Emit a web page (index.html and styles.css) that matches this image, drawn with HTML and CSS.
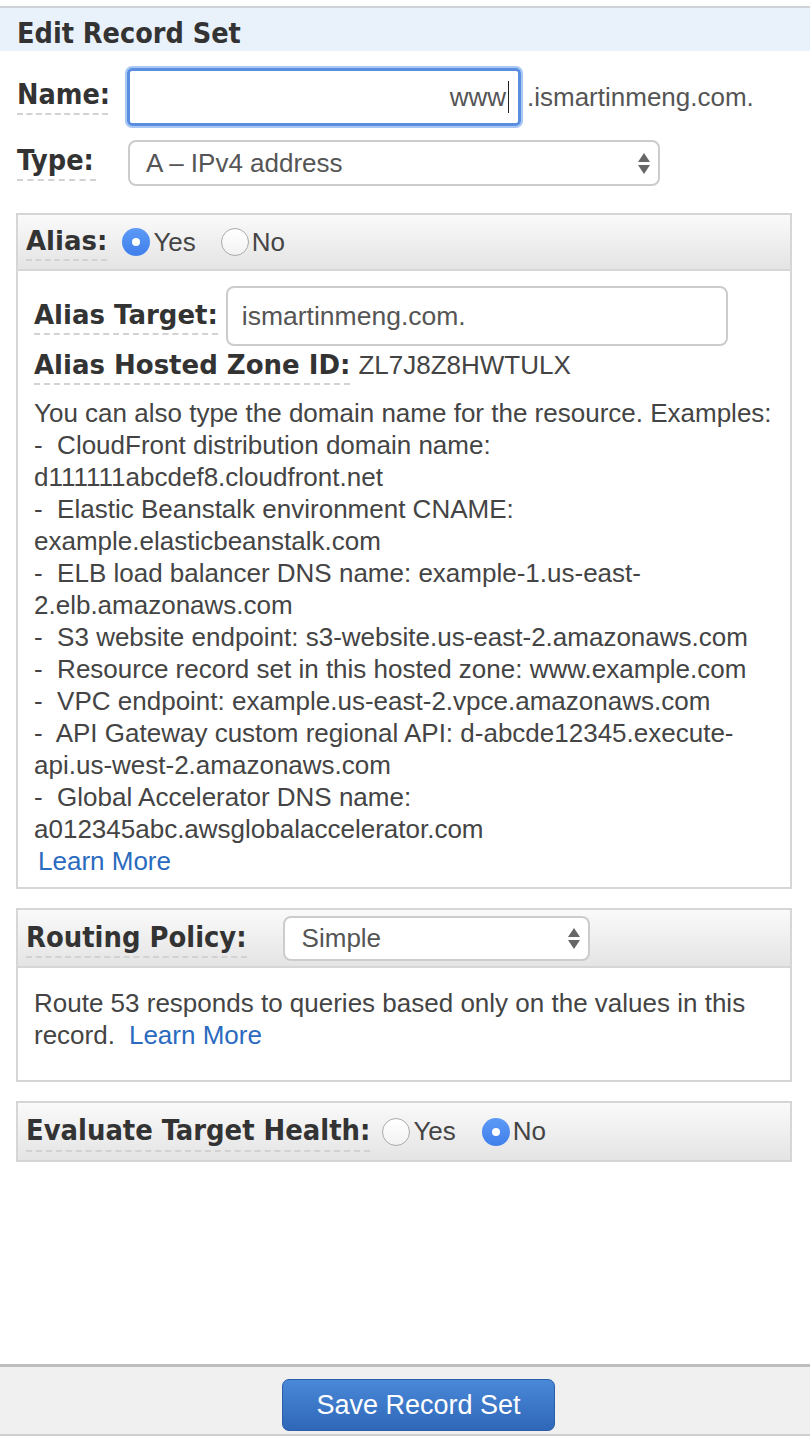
FILE: index.html
```html
<!DOCTYPE html>
<html>
<head>
<meta charset="utf-8">
<link rel="stylesheet" href="styles.css">
</head>
<body>
<div class="page">
  <div class="title-bar">Edit Record Set</div>

  <div class="row name-row">
    <span class="lbl lbl-top">Name:</span>
    <div class="name-input"><span class="name-val">www</span><span class="caret"></span></div>
    <span class="suffix">.ismartinmeng.com.</span>
  </div>

  <div class="row type-row">
    <span class="lbl lbl-top">Type:</span>
    <div class="select type-select"><span>A – IPv4 address</span><span class="arrows"><i class="up"></i><i class="down"></i></span></div>
  </div>

  <div class="panel alias-panel">
    <div class="panel-head">
      <span class="lbl lbl-alias">Alias:</span>
      <span class="radio on"></span><span class="opt">Yes</span>
      <span class="radio off gap"></span><span class="opt">No</span>
    </div>
    <div class="panel-body alias-body">
      <div class="target-row">
        <span class="lbl lbl-wide">Alias Target:</span>
        <div class="text-input">ismartinmeng.com.</div>
      </div>
      <div class="zone-row">
        <span class="lbl lbl-wide">Alias Hosted Zone ID:</span>
        <span class="zone-val">ZL7J8Z8HWTULX</span>
      </div>
      <div class="examples">
        <div>You can also type the domain name for the resource. Examples:</div>
        <div>-&nbsp; CloudFront distribution domain name:</div>
        <div>d111111abcdef8.cloudfront.net</div>
        <div>-&nbsp; Elastic Beanstalk environment CNAME:</div>
        <div>example.elasticbeanstalk.com</div>
        <div>-&nbsp; ELB load balancer DNS name: example-1.us-east-</div>
        <div>2.elb.amazonaws.com</div>
        <div>-&nbsp; S3 website endpoint: s3-website.us-east-2.amazonaws.com</div>
        <div>-&nbsp; Resource record set in this hosted zone: www.example.com</div>
        <div>-&nbsp; VPC endpoint: example.us-east-2.vpce.amazonaws.com</div>
        <div>-&nbsp; API Gateway custom regional API: d-abcde12345.execute-</div>
        <div>api.us-west-2.amazonaws.com</div>
        <div>-&nbsp; Global Accelerator DNS name:</div>
        <div>a012345abc.awsglobalaccelerator.com</div>
        <div class="learn"><a>Learn More</a></div>
      </div>
    </div>
  </div>

  <div class="panel routing-panel">
    <div class="panel-head">
      <span class="lbl lbl-narrow">Routing Policy:</span>
      <div class="select routing-select"><span>Simple</span><span class="arrows"><i class="up"></i><i class="down"></i></span></div>
    </div>
    <div class="panel-body routing-body">
      <div class="routing-text">Route 53 responds to queries based only on the values in this</div>
      <div class="routing-text routing-line2"><span>record.</span><a class="inline-link">Learn More</a></div>
    </div>
  </div>

  <div class="panel health-panel">
    <div class="panel-head">
      <span class="lbl lbl-narrow">Evaluate Target Health:</span>
      <span class="radio off"></span><span class="opt">Yes</span>
      <span class="radio on gap"></span><span class="opt">No</span>
    </div>
  </div>

  <div class="footer">
    <button class="save">Save Record Set</button>
  </div>
</div>
</body>
</html>
```

FILE: styles.css
```css
html, body {
  margin: 0;
  padding: 0;
  background: #fff;
}
body {
  font-family: "Liberation Sans", Arial, sans-serif;
  color: #444;
}
.page {
  min-height: 1436px;
  display: flex;
  flex-direction: column;
  padding-top: 6px;
  box-sizing: border-box;
}
.title-bar {
  border-top: 2px solid #cfd3d8;
  background: #e9f1fb;
  height: 43px;
  line-height: 52px;
  padding-left: 17px;
  font-family: "DejaVu Sans Condensed", "DejaVu Sans", sans-serif;
  font-weight: bold;
  font-size: 28.5px;
  color: #333;
}
.row {
  display: flex;
  align-items: center;
}
.lbl {
  font-family: "DejaVu Sans", Verdana, sans-serif;
  font-weight: bold;
  color: #333;
  border-bottom: 2px dashed #d2d2d2;
  line-height: 1.1;
  padding-bottom: 3px;
  white-space: nowrap;
}
.lbl-top {
  font-family: "DejaVu Sans Condensed", "DejaVu Sans", sans-serif;
  font-size: 28.5px;
}
.name-row {
  margin-top: 15px;
  padding-left: 17px;
  height: 62px;
}
.name-row .lbl { width: 91px; margin-right: 19px; }
.name-input {
  width: 394px;
  height: 58px;
  border: 3px solid #5a8fe0;
  border-radius: 5px;
  box-shadow: 0 0 0 2px #aac8f5;
  display: flex;
  align-items: center;
  justify-content: flex-end;
  padding-right: 9px;
  box-sizing: border-box;
  font-size: 26px;
  color: #555;
}
.caret {
  display: inline-block;
  width: 1px;
  height: 32px;
  background: #222;
  margin-left: 2px;
}
.suffix {
  margin-left: 6px;
  font-size: 26px;
  color: #555;
}
.type-row {
  margin-top: 12px;
  padding-left: 17px;
  height: 46px;
}
.type-row .lbl { width: 79px; margin-right: 32px; }
.select {
  border: 2px solid #ccc;
  border-radius: 8px;
  background: #fff;
  height: 46px;
  box-sizing: border-box;
  display: flex;
  align-items: center;
  justify-content: space-between;
  font-size: 26px;
  color: #555;
}
.type-select {
  width: 532px;
  padding: 0 8px 0 16px;
}
.arrows {
  display: flex;
  flex-direction: column;
  gap: 3px;
}
.arrows i {
  display: block;
  width: 0;
  height: 0;
  border-left: 6px solid transparent;
  border-right: 6px solid transparent;
}
.arrows .up { border-bottom: 9px solid #666; }
.arrows .down { border-top: 9px solid #666; }

.panel {
  margin: 0 18px 0 16px;
  border: 2px solid #d6d6d6;
}
.panel-head {
  background: linear-gradient(#fafafa, #e4e4e4);
  display: flex;
  align-items: center;
  padding-left: 8px;
}
.panel-body {
  border-top: 2px solid #d6d6d6;
}
.alias-panel { margin-top: 27px; }
.alias-panel .panel-head { height: 54px; }
.lbl-alias {
  font-size: 26px;
  margin-right: 15px;
  margin-top: 4px;
}
.radio {
  width: 28px;
  height: 28px;
  border-radius: 50%;
  box-sizing: border-box;
  position: relative;
  flex: none;
}
.radio.on {
  background: linear-gradient(#5d9af7, #3f7fea);
}
.radio.on::after {
  content: "";
  position: absolute;
  left: 10px;
  top: 10px;
  width: 8px;
  height: 8px;
  border-radius: 50%;
  background: #fff;
}
.radio.off {
  border: 1px solid #aaa;
  background: linear-gradient(#fff, #f2f2f2);
}
.opt {
  font-size: 26px;
  color: #444;
  margin-left: 3px;
}
.radio.gap { margin-left: 25px; }

.alias-body {
  padding: 15px 0 8px 16px;
}
.target-row {
  display: flex;
  align-items: center;
}
.lbl-wide {
  font-size: 26px;
  padding-bottom: 3px;
}
.target-row .lbl { margin-right: 8px; margin-top: 4px; }
.text-input {
  width: 502px;
  height: 60px;
  border: 2px solid #ccc;
  border-radius: 8px;
  box-sizing: border-box;
  display: flex;
  align-items: center;
  padding-left: 14px;
  font-size: 26.5px;
  color: #555;
}
.zone-row {
  display: flex;
  align-items: flex-end;
  margin-top: 4px;
}
.zone-row .lbl { margin-right: 8px; }
.zone-val {
  font-size: 26px;
  color: #444;
  padding-bottom: 4px;
}
.examples {
  margin-top: 12px;
  padding-bottom: 2px;
  font-size: 26px;
  line-height: 32px;
  color: #444;
}
.learn { padding-left: 4px; }
a {
  color: #2a6bbf;
  text-decoration: none;
}

.routing-panel { margin-top: 19px; }
.routing-panel .panel-head { height: 56px; }
.lbl-narrow {
  font-family: "DejaVu Sans Condensed", "DejaVu Sans", sans-serif;
  font-size: 28.8px;
}
.routing-panel .lbl { margin-right: 36px; margin-top: 4px; }
.routing-select {
  width: 307px;
  height: 45px;
  padding: 0 8px 0 17px;
}
.routing-body {
  height: 114px;
  box-sizing: border-box;
  padding: 19px 16px 0 16px;
}
.routing-text {
  font-size: 26px;
  line-height: 32px;
  color: #444;
  white-space: nowrap;
}
.routing-line2 {
  display: flex;
  gap: 14px;
}

.health-panel { margin-top: 19px; }
.health-panel .panel-head { height: 57px; }
.health-panel .lbl { margin-right: 12px; margin-top: 4px; }
.health-panel .radio.gap { margin-left: 26px; }

.footer {
  margin-top: auto;
  border-top: 3px solid #bdbdbd;
  border-bottom: 2px solid #cfcfcf;
  background: #f0f0f0;
  height: 72px;
  box-sizing: border-box;
  display: flex;
  justify-content: center;
  padding-top: 12px;
}
.save {
  width: 273px;
  height: 52px;
  border: 1px solid #2a5ea8;
  border-radius: 7px;
  background: linear-gradient(#4a88d8, #2f67b8);
  color: #fff;
  font-family: "Liberation Sans", Arial, sans-serif;
  font-size: 27px;
  margin-left: 27px;
}
```
